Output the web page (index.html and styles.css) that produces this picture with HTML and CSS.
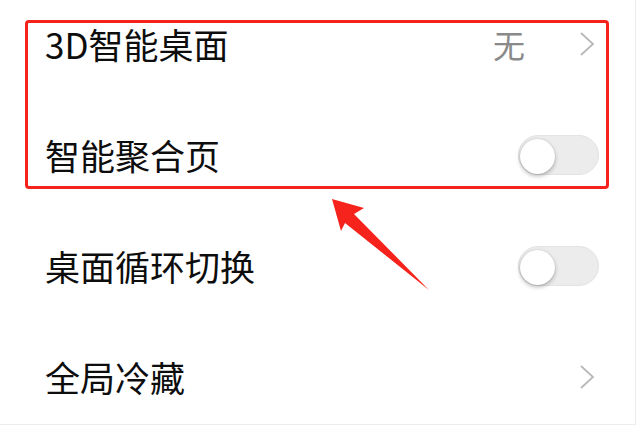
FILE: index.html
```html
<!DOCTYPE html>
<html lang="zh-CN">
<head>
<meta charset="utf-8">
<title>设置</title>
<link rel="stylesheet" href="styles.css">
</head>
<body>
<div class="frame">
  <div class="list">
    <div class="row">
      <span class="label">3D智能桌面</span>
      <span class="trail"><span class="value">无</span><svg class="chev" viewBox="0 0 16 26" width="16" height="26"><polyline points="2,2 14,13 2,24" fill="none" stroke="#b8b8b8" stroke-width="1.8"/></svg></span>
    </div>
    <div class="row">
      <span class="label">智能聚合页</span>
      <span class="toggle"><span class="knob"></span></span>
    </div>
    <div class="row">
      <span class="label">桌面循环切换</span>
      <span class="toggle"><span class="knob"></span></span>
    </div>
    <div class="row">
      <span class="label">全局冷藏</span>
      <span class="trail"><svg class="chev" viewBox="0 0 16 26" width="16" height="26"><polyline points="2,2 14,13 2,24" fill="none" stroke="#b8b8b8" stroke-width="1.8"/></svg></span>
    </div>
  </div>
  <div class="highlight"></div>
  <svg class="arrow" width="640" height="427" viewBox="0 0 640 427"><path d="M332 199 L364 208 L354 214 L429 290 L345 223 L341 231 Z" fill="#f5231b"/></svg>
</div>
</body>
</html>
```
FILE: styles.css
```css
html, body {
  margin: 0;
  padding: 0;
  background: #ffffff;
}
body {
  width: 640px;
  height: 427px;
  overflow: hidden;
  font-family: "Noto Sans CJK SC", "Noto Sans", sans-serif;
}
.frame {
  position: relative;
  width: 635px;
  height: 424px;
  border-right: 1px solid #ececec;
  border-bottom: 1px solid #ececec;
  overflow: hidden;
}
.list {
  display: flex;
  flex-direction: column;
  margin-top: -12px;
}
.row {
  height: 111px;
  display: flex;
  align-items: center;
  justify-content: space-between;
  padding: 0 36px 0 45px;
}
.label {
  font-size: 35px;
  color: #0d0d0d;
  line-height: 1;
}
.trail {
  display: flex;
  align-items: center;
}
.value {
  font-size: 32px;
  color: #8a8a8a;
  line-height: 1;
  margin-right: 54px;
}
.chev {
  display: block;
  margin-right: 4px;
}
.toggle {
  width: 81px;
  height: 40px;
  border-radius: 20px;
  background: #ececec;
  border: 1px solid #e3e3e3;
  box-sizing: border-box;
  display: flex;
  align-items: center;
  padding-left: 1px;
}
.knob {
  width: 35px;
  height: 35px;
  border-radius: 50%;
  background: #ffffff;
  box-shadow: 0 2px 4px rgba(0,0,0,0.28), 0 0 1px rgba(0,0,0,0.2);
  margin-top: 3px;
}
.highlight {
  position: absolute;
  left: 25px;
  top: 20px;
  width: 578px;
  height: 163px;
  border: 3px solid #f5231b;
  border-radius: 4px;
}
.arrow {
  position: absolute;
  left: 0;
  top: 0;
}
```
